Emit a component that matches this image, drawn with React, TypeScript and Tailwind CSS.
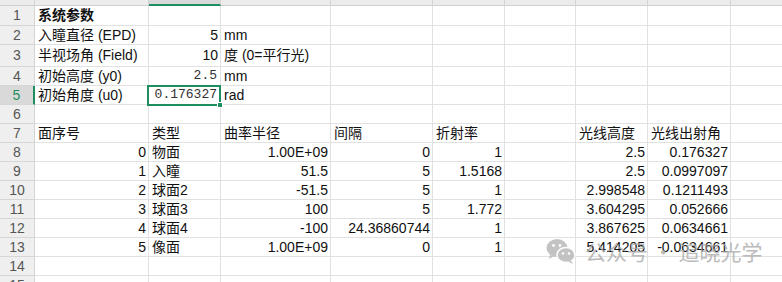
import React from "react";

const W = [35, 114, 72, 110, 102, 72, 71, 72, 83];
const HEIGHTS = [20, 19, 22, 19, 19, 19, 19, 19, 19, 19, 19, 19, 19, 19, 19];

type Cell = { t?: string; r?: boolean; mono?: boolean; bold?: boolean };

const rows: Cell[][] = [
  [{ t: "系统参数", bold: true }],
  [{ t: "入瞳直径 (EPD)" }, { t: "5", r: true }, { t: "mm" }],
  [{ t: "半视场角 (Field)" }, { t: "10", r: true }, { t: "度 (0=平行光)" }],
  [{ t: "初始高度 (y0)" }, { t: "2.5", r: true, mono: true }, { t: "mm" }],
  [{ t: "初始角度 (u0)" }, { t: "0.176327", r: true, mono: true }, { t: "rad" }],
  [],
  [{ t: "面序号" }, { t: "类型" }, { t: "曲率半径" }, { t: "间隔" }, { t: "折射率" }, {}, { t: "光线高度" }, { t: "光线出射角" }],
  [{ t: "0", r: true }, { t: "物面" }, { t: "1.00E+09", r: true }, { t: "0", r: true }, { t: "1", r: true }, {}, { t: "2.5", r: true }, { t: "0.176327", r: true }],
  [{ t: "1", r: true }, { t: "入瞳" }, { t: "51.5", r: true }, { t: "5", r: true }, { t: "1.5168", r: true }, {}, { t: "2.5", r: true }, { t: "0.0997097", r: true }],
  [{ t: "2", r: true }, { t: "球面2" }, { t: "-51.5", r: true }, { t: "5", r: true }, { t: "1", r: true }, {}, { t: "2.998548", r: true }, { t: "0.1211493", r: true }],
  [{ t: "3", r: true }, { t: "球面3" }, { t: "100", r: true }, { t: "5", r: true }, { t: "1.772", r: true }, {}, { t: "3.604295", r: true }, { t: "0.052666", r: true }],
  [{ t: "4", r: true }, { t: "球面4" }, { t: "-100", r: true }, { t: "24.36860744", r: true }, { t: "1", r: true }, {}, { t: "3.867625", r: true }, { t: "0.0634661", r: true }],
  [{ t: "5", r: true }, { t: "像面" }, { t: "1.00E+09", r: true }, { t: "0", r: true }, { t: "1", r: true }, {}, { t: "5.414205", r: true }, { t: "-0.0634661", r: true }],
  [],
  [],
];

const LETTERS = ["A", "B", "C", "D", "E", "F", "G", "H", "I"];

function WeChatIcon() {
  return (
    <svg width="30" height="26" viewBox="0 0 30 26">
      <ellipse cx="11" cy="10" rx="10.5" ry="9" fill="#bdbdbd" />
      <path d="M4 17 L3 21 L8 18 Z" fill="#bdbdbd" />
      <circle cx="7.5" cy="7.5" r="1.4" fill="#fff" />
      <circle cx="14" cy="7.5" r="1.4" fill="#fff" />
      <ellipse cx="20" cy="17" rx="9" ry="7.5" fill="#bdbdbd" stroke="#fff" strokeWidth="1.5" />
      <path d="M25 22.5 L27 26 L22 23.5 Z" fill="#bdbdbd" />
      <circle cx="17" cy="15.5" r="1.2" fill="#fff" />
      <circle cx="23" cy="15.5" r="1.2" fill="#fff" />
    </svg>
  );
}

export default function App() {
  const font = { fontFamily: '"Liberation Sans", Arial, "Noto Sans CJK SC", sans-serif' };
  return (
    <div className="relative w-[782px] h-[282px] overflow-hidden bg-white text-[14px] text-[#111]" style={font}>
      {/* column header */}
      <div className="flex h-[6px] overflow-hidden">
        {W.map((w, i) => (
          <div
            key={i}
            style={{ width: w }}
            className={`shrink-0 relative flex justify-center border-r border-[#d4d4d4] ${
              i === 2 ? "bg-[#d9d9d9] border-b-2 border-b-[#1e8e5e]" : "bg-[#ececec] border-b border-b-[#d0d0d0]"
            }`}
          >
            {i > 0 && (
              <span className="absolute top-[-10px] text-[12px] leading-[12px] text-[#777]">{LETTERS[i - 1]}</span>
            )}
          </div>
        ))}
        <div className="flex-1 bg-[#ececec] border-b border-b-[#d0d0d0]" />
      </div>
      {HEIGHTS.map((h, ri) => {
        const row = rows[ri] || [];
        const sel = ri === 4;
        return (
          <div key={ri} className="flex" style={{ height: h }}>
            <div
              style={{ width: W[0] }}
              className={`shrink-0 flex items-center justify-center border-b border-[#d6d6d6] ${
                sel ? "bg-[#d9d9d9] text-[#1e8e5e] border-r-2 border-r-[#1e8e5e]" : "bg-[#efefef] text-[#555] border-r border-r-[#d4d4d4]"
              }`}
            >
              {ri + 1}
            </div>
            {W.slice(1).map((w, ci) => {
              const c = row[ci] || {};
              return (
                <div
                  key={ci}
                  style={{ width: w }}
                  className={`shrink-0 flex items-center border-r border-b border-[#e1e1e1] whitespace-nowrap ${
                    c.r ? "justify-end pr-[2px]" : "justify-start pl-[3px]"
                  }`}
                >
                  {c.t && (
                    <span
                      className={`${c.bold ? "font-bold" : ""} ${
                        c.mono ? "text-[13px] text-[#333] pr-[1px]" : ""
                      }`}
                      style={c.mono ? { fontFamily: '"Liberation Mono", "Courier New", monospace' } : undefined}
                    >
                      {c.t}
                    </span>
                  )}
                </div>
              );
            })}
            <div className="flex-1 border-b border-[#e1e1e1]" />
          </div>
        );
      })}
      {/* selection box on B5 */}
      <div className="absolute left-[147px] top-[85px] w-[74px] h-[21px] border-2 border-[#1e8e5e] pointer-events-none" />
      <div className="absolute left-[217px] top-[102px] w-[6px] h-[6px] bg-[#1e8e5e] border border-white pointer-events-none" />
      {/* watermark */}
      <div className="absolute left-[546px] top-[238px] flex items-center gap-[9px] pointer-events-none opacity-90">
        <WeChatIcon />
        <span
          className="text-[21px] leading-none text-[#a9a9a9]"
          style={{ fontFamily: '"Noto Sans CJK SC", sans-serif', opacity: 0.85 }}
        >
          公众号 · 追晓光学
        </span>
      </div>
    </div>
  );
}
